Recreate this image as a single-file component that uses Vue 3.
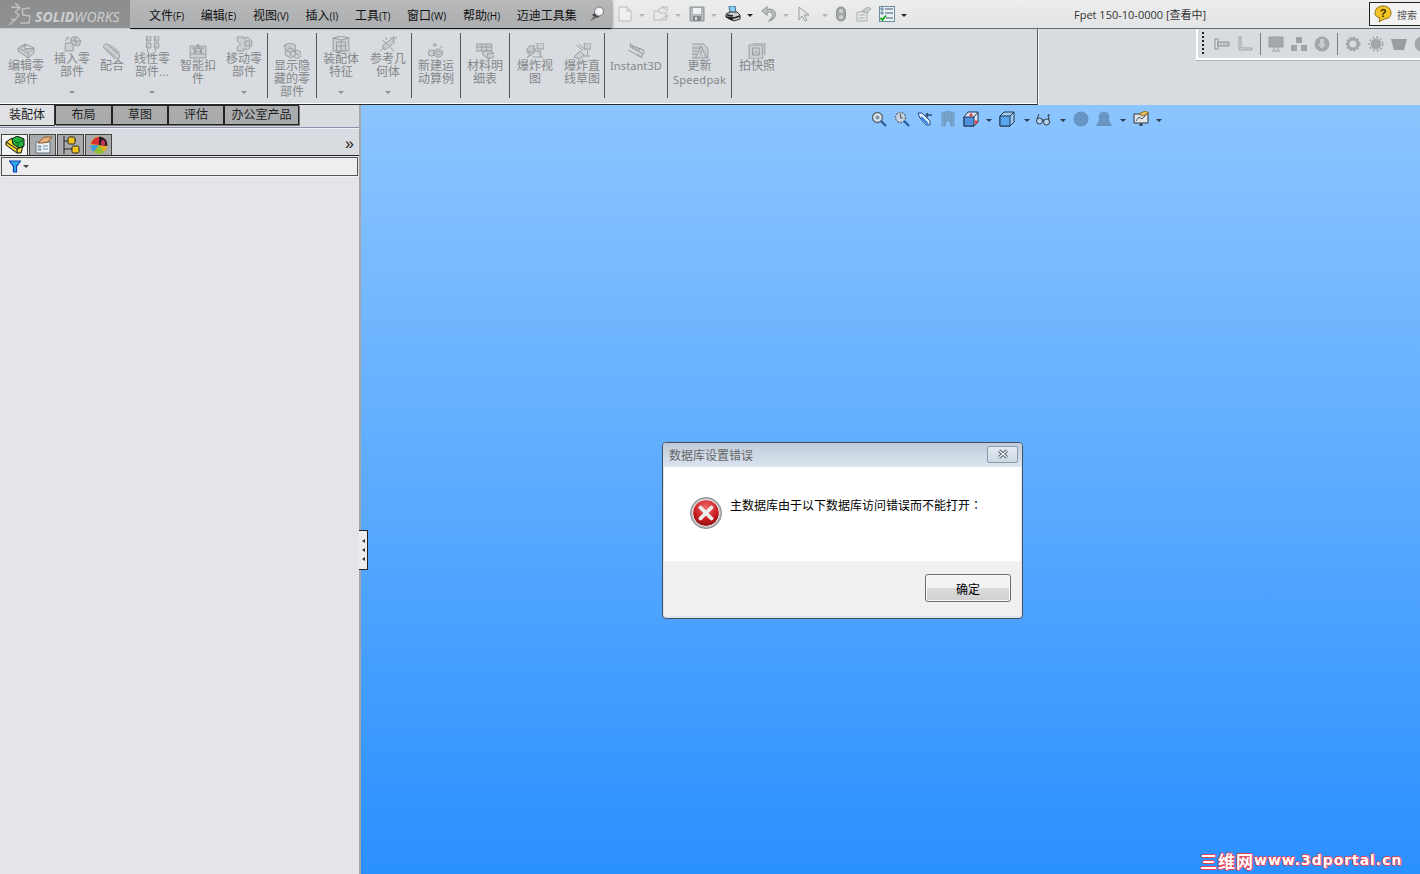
<script setup>
const menus = [
  ['文件', '(F)'], ['编辑', '(E)'], ['视图', '(V)'], ['插入', '(I)'], ['工具', '(T)'], ['窗口', '(W)'], ['帮助', '(H)'], ['迈迪工具集', '']
]
const S = 'sep'
const ribbon = [
  { w: 46, l: ['编辑零', '部件'], d: 'M1 5 7 1 15 5 15 10 10 15 1 8Z M7 1 7 6 15 5 M1 5 10 10 10 15 M10 10 15 5 M4 4 9 2 M7 6 10 7' },
  { w: 46, l: ['插入零', '部件'], arrow: 1, up: 1, d: 'M2 7 8 7 9 9 9 15 2 15Z M8 1 13 1 16 5 14 10 9 9 7 5Z M2 5 4 1 6 3 M11 1 11 9 M7 5 16 5 M9 3 14 8' },
  { w: 34, l: ['配合'], d: 'M4 1 14 11 A2.4 2.4 0 0 1 10 15 L1 5 A2 2 0 0 1 5 2 L13 11 M7 2 15 10 M3 6 11 14' },
  { w: 46, l: ['线性零', '部件...'], arrow: 1, up: 1, d: 'M3 0 7 0 7 5 3 5Z M10 0 14 0 14 5 10 5Z M3 7 7 7 7 12 3 12Z M10 7 14 7 14 12 10 12Z M3 3 5 3 M10 3 12 3 M3 10 5 10 M10 10 12 10 M4 13 4 16 M11 13 11 16' },
  { w: 46, l: ['智能扣', '件'], d: 'M1 3 15 3 15 15 1 15Z M1 11 15 11 M5 11 5 7 8 5 11 7 11 11 M8 1 9 5 13 5 10 7 11 10 8 8 5 10 6 7 3 5 7 5Z' },
  { w: 46, l: ['移动零', '部件'], arrow: 1, up: 1, d: 'M2 1 8 1 8 3 11 1 15 5 15 10 11 14 8 12 8 15 2 15 2 11 5 8 2 5Z M9 5 13 5 13 10 9 10Z' },
  S,
  { w: 48, l: ['显示隐', '藏的零', '部件'], d: 'M6 0 11 2 11 7 6 9 2 7 2 2Z M2 8 7 5 11 8 11 12 7 15 2 12Z M9 9 13 7 16 9 16 13 12 16 9 13 M6 3 6 6 M0 4 3 1 M7 9 7 13 M11 10 14 12' },
  S,
  { w: 48, l: ['装配体', '特征'], arrow: 1, up: 1, d: 'M1 2 8 0 15 2 15 15 1 15Z M1 2 8 4 15 2 M4 6 12 6 12 15 4 15Z M8 4 8 15 M4 10 12 10' },
  { w: 46, l: ['参考几', '何体'], arrow: 1, up: 1, d: 'M3 10 11 3 14 6 5 14Z M1 15 5 11 M13 0 13 5 M10 2 16 2 M3 4 8 9 M9 10 13 15 M6 1 7 4' },
  S,
  { w: 48, l: ['新建运', '动算例'], d: 'M10 6 A4 4 0 1 0 10 14 A4 4 0 1 0 10 6Z M4 7 A3 3 0 1 0 4 13 A3 3 0 1 0 4 7Z M10 8 A2 2 0 1 0 10 12 A2 2 0 1 0 10 8Z M7 0 7 4 M5 2 9 2 M12 4 14 4 M1 5 2 5' },
  S,
  { w: 48, l: ['材料明', '细表'], d: 'M0 1 14 1 14 8 0 8Z M0 4 14 4 M5 1 5 8 M9 1 9 8 M6 9 10 7 16 10 16 14 11 16 6 12Z M10 11 16 10 M10 11 11 16' },
  S,
  { w: 50, l: ['爆炸视', '图'], d: 'M10 0 16 0 16 6 10 6Z M3 3 8 3 6 6 9 6 5 9 8 9 1 15 4 10 1 10 4 8 0 8Z M8 8 13 8 13 14 M6 14 15 14' },
  { w: 44, l: ['爆炸直', '线草图'], d: 'M10 0 16 0 16 6 10 6Z M3 2 9 8 M5 1 11 7 M1 14 6 8 10 12 6 16Z M13 7 13 12 M9 13 15 13' },
  S,
  { w: 62, l: ['Instant3D'], en: 1, d: 'M3 0 3 4 14 11 M3 2 15 7 15 11 M5 2 5 5 M7 3 7 6 M9 4 9 7 M11 5 11 8 M1 7 12 14 M9 11 13 15 14 11' },
  S,
  { w: 63, l: ['更新', 'Speedpak'], d: 'M1 1 11 1 15 5 15 15 1 15 M1 5 9 5 M1 8 6 8 M1 11 5 11 M9 3 4 15 M9 3 14 15 M9 7 9 11 M9 12 9 13' },
  S,
  { w: 50, l: ['拍快照'], d: 'M4 0 15 0 15 12 M1 2 13 2 13 16 1 16Z M4 5 10 5 10 12 4 12Z M4 12 7 8 10 12' }
]
</script>

<template>
  <div class="app">
    <header class="top">
      <div class="logo">
        <svg class="logo-mark" viewBox="0 0 24 24" fill="none" stroke="#bfc1c3" stroke-width="1.5">
          <path d="M7 1 12 6 7 10 M12 6 3 5 M7 10 11 13 7 18 1 23 M7 18 3 17 M14 7 22 6 M14 7 15 13 22 14 21 21 12 21" />
        </svg>
        <span class="logo-a">SOLID</span><span class="logo-b">WORKS</span>
      </div>
      <nav class="menu">
        <span v-for="m in menus" :key="m[0]" class="menu-item">{{ m[0] }}<small>{{ m[1] }}</small></span>
        <svg class="pin" viewBox="0 0 16 16">
          <path d="M1 15 5 10 7 12Z" fill="#666" />
          <path d="M3 9 8 12 11 10 7 6Z" fill="#3f4245" />
          <circle cx="10" cy="5.5" r="4.5" fill="#eceef0" stroke="#77797c" />
          <circle cx="11" cy="4.5" r="2" fill="#fff" />
        </svg>
      </nav>
      <div class="quick">
        <svg class="q" style="margin-left:6px" viewBox="0 0 16 16"><path d="M2 1 10 1 14 5 14 15 2 15Z M10 1 10 5 14 5" fill="#eef0f1" stroke="#b9bbbd" /></svg>
        <i class="caret dim"></i>
        <svg class="q g2" viewBox="0 0 16 16"><path d="M1 5 6 5 7 7 13 7 13 14 1 14Z M5 4 10 1 12 4 M9 1 14 1 14 6 M7 14 15 9 13 14" fill="#e8e9ea" stroke="#b9bbbd" /></svg>
        <i class="caret dim"></i>
        <svg class="q g2" viewBox="0 0 16 16"><path d="M1 1 15 1 15 15 1 15Z" fill="#b5b8ba" stroke="#8f9294" /><path d="M4 2 12 2 12 8 4 8Z" fill="#eef0f1" /><path d="M4 10 12 10 12 15 4 15Z" fill="#85888a" /><path d="M6 11 8 11 8 14 6 14Z" fill="#dcdee0" /></svg>
        <i class="caret dim"></i>
        <svg class="q g2" viewBox="0 0 16 16"><path d="M4 0 10 0 11 7 5 7Z" fill="#8fcdf0" stroke="#3a6a96" /><path d="M1 8 5 6 12 6 15 9 15 13 9 15 1 11Z" fill="#c9cbcd" stroke="#333" /><path d="M1 11 9 12 15 10 M3 12 8 14 M2 9 8 10" stroke="#222" fill="none" stroke-width="1.4" /></svg>
        <i class="caret blk"></i>
        <svg class="q g2" viewBox="0 0 16 16"><path d="M6 1 1 5 6 9 6 6 C11 5 13 8 11 11 L8 15 C14 13 16 8 13 5 11 3 8 3 6 4Z" fill="#c6c8ca" stroke="#9b9ea0" stroke-width="1.2" /></svg>
        <i class="caret dim"></i>
        <svg class="q g4" viewBox="0 0 16 16"><path d="M1 1 1 14 4 10 7 15 9 14 6 9 11 9Z" fill="#e6e7e8" stroke="#9b9ea0" /></svg>
        <i class="caret dim c2"></i>
        <svg class="q g5" viewBox="0 0 16 16"><rect x="1.5" y="1" width="9" height="14" rx="4.5" fill="#a4a6a8" stroke="#8d9092" /><circle cx="6" cy="5" r="2" fill="#cfd1d3" /><circle cx="6" cy="11" r="2" fill="#cfd1d3" /></svg>
        <svg class="q g6" viewBox="0 0 16 16"><path d="M1 6 11 6 11 15 1 15Z M3 9 9 9 M3 12 9 12" fill="#e8e9ea" stroke="#a8abad" /><path d="M6 5 12 1 15 3 11 7Z" fill="#c8cacc" stroke="#a8abad" /></svg>
        <svg class="q g7" viewBox="0 0 16 16"><rect x="0.5" y="0.5" width="15" height="15" fill="#eaf1f6" stroke="#6f8ba0" /><path d="M6 3 14 3 M6 7 14 7 M7 12 14 12" stroke="#47586a" /><path d="M2 2 4 2 4 4 2 4Z M2 6 4 6 4 8 2 8Z" fill="none" stroke="#5a7ea0" /><path d="M1.5 12 3.5 14 7 9.5" stroke="#15a415" stroke-width="1.8" fill="none" /></svg>
        <i class="caret blk"></i>
      </div>
      <div class="doc-title">Fpet 150-10-0000 [查看中]</div>
      <div class="search">
        <svg class="help" viewBox="0 0 18 18">
          <path d="M9 1 C14 1 17 4 17 8 17 12 14 14 10 14 L5 17 6 13 C3 12 1 11 1 8 1 4 4 1 9 1Z" fill="#f5c528" stroke="#8f7215" />
          <text x="9" y="12" text-anchor="middle" class="help-q">?</text>
        </svg>
        <span>搜索</span>
      </div>
    </header>

    <section class="ribbon">
      <div class="ribbon-main">
        <template v-for="(b, i) in ribbon" :key="i">
          <div v-if="b === S" class="sep"></div>
          <div v-else class="rbtn" :class="{ up: b.up }" :style="{ width: b.w + 'px' }">
            <svg class="ricon" viewBox="0 0 16 16" preserveAspectRatio="none"><path :d="b.d" /></svg>
            <div class="rtext" :class="{ en: b.en }">
              <div v-for="t in b.l" :key="t" :class="{ latin: t === 'Speedpak' }">{{ t }}</div>
            </div>
            <i v-if="b.arrow" class="rarrow"></i>
          </div>
        </template>
      </div>
      <div class="ribbon-side">
        <div class="sidebar-tools">
          <span class="grip"></span>
          <svg class="t" viewBox="0 0 18 16"><path d="M2 3 5 3 5 13 2 13Z M5 6 16 6 16 10 5 10Z M8 6 8 10 M11 6 11 10 M14 6 14 10" fill="#dcdee0" stroke="#8f9294" /></svg>
          <svg class="t" viewBox="0 0 18 16"><path d="M3 1 5 1 5 12 16 12 16 14 3 14Z" fill="#dcdee0" stroke="#9da0a2" /></svg>
          <i class="tsep"></i>
          <svg class="t" viewBox="0 0 18 16"><path d="M2 1 16 1 16 11 2 11Z M7 11 7 14 M11 11 11 14 M5 15 13 15" fill="#a6a9ab" stroke="#9a9d9f" /></svg>
          <svg class="t" viewBox="0 0 18 16"><path d="M6 1 12 1 12 7 6 7Z M1 9 7 9 7 15 1 15Z M11 9 17 9 17 15 11 15Z" fill="#a0a3a5" /></svg>
          <svg class="t" viewBox="0 0 18 16"><circle cx="9" cy="8" r="7.5" fill="#a4a7a9" /><path d="M7 3 11 3 11 8 13 8 9 13 5 8 7 8Z" fill="#c8cacc" /></svg>
          <i class="tsep"></i>
          <svg class="t" viewBox="0 0 18 16"><circle cx="9" cy="8" r="5" fill="none" stroke="#a4a7a9" stroke-width="3" /><circle cx="9" cy="8" r="6.8" fill="none" stroke="#a4a7a9" stroke-width="1.4" stroke-dasharray="2 2" /></svg>
          <svg class="t" viewBox="0 0 18 16"><circle cx="9" cy="8" r="4.4" fill="#a4a7a9" stroke="#a4a7a9" stroke-width="2" /><circle cx="9" cy="8" r="6.8" fill="none" stroke="#a4a7a9" stroke-width="1.6" stroke-dasharray="2 2" /></svg>
          <svg class="t" viewBox="0 0 18 16"><path d="M1 3 17 3 14 14 4 14Z" fill="#9a9d9f" /></svg>
          <svg class="t" viewBox="0 0 18 16"><circle cx="9" cy="8" r="7.5" fill="#a4a7a9" /></svg>
        </div>
      </div>
    </section>

    <main class="work">
      <aside class="side">
        <div class="side-head">
          <div class="tabs">
            <span class="tab on">装配体</span>
            <span class="tab w56">布局</span>
            <span class="tab w55">草图</span>
            <span class="tab w55">评估</span>
            <span class="tab w74">办公室产品</span>
          </div>
          <div class="rule"></div>
          <div class="mgr">
            <span class="mtab on">
              <svg viewBox="0 0 20 18"><path d="M1 6 7 2 18 10 16 17 12 17 1 9Z" fill="#f2d63a" stroke="#111" /><path d="M1 6 12 13 12 17 M12 13 18 10" fill="none" stroke="#111" /><path d="M7 3 12 0 19 3 19 10 14 12 8 8Z" fill="#1fb040" stroke="#111" /><path d="M9 5 13 7 18 4 M13 7 13 11" fill="none" stroke="#0a5d1e" /></svg>
            </span>
            <span class="mtab">
              <svg viewBox="0 0 20 18"><path d="M3 6 17 6 17 17 3 17Z" fill="#eef1f4" stroke="#66727e" /><path d="M5 10 8 10 8 11 5 11Z M5 13 8 13 8 14 5 14Z M10 10 15 10 M10 13 15 13" stroke="#6a8ca8" fill="none" /><path d="M5 7 11 1 19 1 15 6 9 7Z" fill="#e6b27c" stroke="#8a5a2d" /></svg>
            </span>
            <span class="mtab">
              <svg viewBox="0 0 20 18"><path d="M3 0 3 18 M3 5 7 5 M3 13 11 13 M11 4 15 4" stroke="#222" fill="none" /><rect x="7" y="1" width="7" height="7" rx="1.5" fill="#f2c21d" stroke="#222" /><rect x="11" y="10" width="7" height="7" rx="1.5" fill="#f2c21d" stroke="#222" /></svg>
            </span>
            <span class="mtab">
              <svg viewBox="0 0 20 18"><circle cx="10" cy="9" r="8.5" fill="#e0b020" /><path d="M2 8 A8 8 0 0 1 10 1 L10 9Z" fill="#d83030" /><path d="M1.5 9 10 9 5 16 A8 8 0 0 1 1.5 9Z" fill="#3f9ed8" /><path d="M10 0.5 A8.5 8.5 0 0 1 18.5 10 L10 9Z" fill="#2a1a28" /><path d="M5 16 10 9 15 16 A8 8 0 0 1 5 16Z" fill="#8fc033" /><ellipse cx="14" cy="7" rx="2" ry="3" fill="#c8385a" /></svg>
            </span>
            <span class="more">»</span>
          </div>
        </div>
        <div class="filter">
          <svg class="funnel" viewBox="0 0 12 13"><path d="M0.5 1 11.5 1 7.5 6.5 7.5 12 4.5 12 4.5 6.5Z" fill="#35a8e8" stroke="#0f3fb0" stroke-width="1.2" /></svg>
          <i class="caret blk small"></i>
        </div>
      </aside>

      <section class="view">
        <div class="handle"><i></i><i></i><i></i></div>
        <div class="hud">
          <svg class="h" viewBox="0 0 16 16"><circle cx="6.5" cy="6.5" r="5" fill="#d7e3ee" stroke="#5c6a78" stroke-width="1.4" /><circle cx="6.5" cy="6.5" r="2" fill="#8393a3" /><path d="M10 10 15 15" stroke="#2f60a0" stroke-width="2.4" /></svg>
          <svg class="h" viewBox="0 0 16 16"><circle cx="6.5" cy="6.5" r="5" fill="#c7d5e2" stroke="#66727e" stroke-width="1.4" stroke-dasharray="2 1" /><path d="M6.5 3 6.5 7 9 7" stroke="#555" fill="none" /><path d="M10 10 15 15" stroke="#2f60a0" stroke-width="2.4" /></svg>
          <svg class="h" viewBox="0 0 16 16"><path d="M1 2 5 2 13 10 13 14 9 14 3 7Z" fill="#e5f0fb" stroke="#1f4a86" /><path d="M4 6 11 13" stroke="#2c7be0" stroke-width="2" /><path d="M15 4 9 4 M11 2 9 4 11 6" stroke="#2f4f78" fill="none" stroke-width="1.4" /></svg>
          <svg class="h" viewBox="0 0 16 16"><path d="M2 2 C6 0 10 0 14 2 L14 15 11 15 C11 8 5 8 5 15 L2 15Z" fill="#7aa6ce" stroke="#7099c2" /><path d="M5 2 5 14 M8 1 8 9 M11 2 11 14" stroke="#6a93bb" /></svg>
          <svg class="h" viewBox="0 0 16 16"><path d="M1 6 5 1 15 1 15 11 11 15 1 15Z" fill="#dbeaf8" stroke="#23344a" /><path d="M1 6 11 6 11 15 1 15Z" fill="#4f92e0" stroke="#23344a" /><path d="M11 6 15 1" stroke="#23344a" /><path d="M8 2 8 6 M6 4 10 4 M11 11 15 11 M13 9 13 13" stroke="#d92020" /></svg>
          <i class="caret blk c3"></i>
          <svg class="h" viewBox="0 0 16 16"><path d="M1 5 5 1 15 1 15 11 11 15 1 15Z" fill="#9fccf5" stroke="#23344a" /><path d="M1 5 11 5 11 15 1 15Z" fill="#5aa5f0" stroke="#23344a" /><path d="M11 5 15 1" stroke="#23344a" /></svg>
          <i class="caret blk c3 c4"></i>
          <svg class="h" viewBox="0 0 16 16"><circle cx="4.5" cy="10" r="3" fill="#b5d3ee" stroke="#2f3a44" /><circle cx="11.5" cy="11" r="3" fill="#b5d3ee" stroke="#2f3a44" /><path d="M7 9 9 9 M2 8 4 3 M14 9 13 4 15 4" stroke="#2f3a44" fill="none" /></svg>
          <i class="caret blk c3 c5"></i>
          <svg class="h" viewBox="0 0 16 16"><circle cx="8" cy="8" r="7.5" fill="#6795c4" /></svg>
          <svg class="h" viewBox="0 0 16 16"><circle cx="8" cy="6" r="5.5" fill="#6795c4" /><path d="M0 15 3 9 13 9 16 15Z" fill="#6795c4" /></svg>
          <i class="caret blk c3 c6"></i>
          <svg class="h" viewBox="0 0 16 16"><path d="M1 3 15 3 15 12 1 12Z" fill="#dfe6ee" stroke="#2f3338" /><path d="M3 10 6 6 9 8 13 4" stroke="#4a5058" fill="none" /><path d="M6 3 12 0 16 2 10 5Z" fill="#e8bd5b" stroke="#8a6a24" /><path d="M6 14 10 14 M8 12 8 15" stroke="#222" /></svg>
          <i class="caret blk c3"></i>
        </div>

        <div class="dialog">
          <div class="dlg-title">
            <span>数据库设置错误</span>
            <button class="dlg-close"><svg viewBox="0 0 12 10"><path d="M2 1.5 10 8.5 M10 1.5 2 8.5" stroke="#4a5866" stroke-width="3" /><path d="M2 1.5 10 8.5 M10 1.5 2 8.5" stroke="#fff" stroke-width="1.2" /></svg></button>
          </div>
          <div class="dlg-body">
            <svg class="err" viewBox="0 0 32 32">
              <defs>
                <radialGradient id="er" cx="50%" cy="30%" r="75%">
                  <stop offset="0" stop-color="#f0686a" />
                  <stop offset="0.6" stop-color="#c81e22" />
                  <stop offset="1" stop-color="#7c0a0c" />
                </radialGradient>
              </defs>
              <circle cx="16" cy="16" r="15.5" fill="#b5b8ba" stroke="#8c8f92" />
              <circle cx="16" cy="16" r="13.4" fill="url(#er)" stroke="#f1f1f1" />
              <path d="M10.5 10.5 21.5 21.5 M21.5 10.5 10.5 21.5" stroke="#efeeee" stroke-width="3.8" stroke-linecap="round" />
            </svg>
            <p>主数据库由于以下数据库访问错误而不能打开<span class="colon">：</span></p>
          </div>
          <div class="dlg-foot">
            <button class="dlg-ok">确定</button>
          </div>
        </div>

        <div class="mark"><b>三维网</b><span>www.3dportal.cn</span></div>
      </section>
    </main>
  </div>
</template>

<style>
html, body { margin: 0; overflow: hidden; }
</style>

<style scoped>
.app {
  width: 1420px;
  height: 874px;
  display: flex;
  flex-direction: column;
  overflow: hidden;
  font-family: "Noto Sans CJK SC", "Noto Sans", sans-serif;
  font-size: 12px;
  background: #d8dbdf;
}
.top {
  height: 29px;
  box-sizing: border-box;
  flex: none;
  display: flex;
  background: linear-gradient(#eceded, #e3e4e5);
  border-bottom: 1px solid #6a6d70;
  position: relative;
}
.logo {
  width: 130px;
  height: 29px;
  flex: none;
  display: flex;
  align-items: center;
  box-sizing: border-box;
  padding: 0 0 0 8px;
  background: linear-gradient(#8c8d8e, #909192);
  border-bottom: 1px solid #c8cacc;
  font-family: "Open Sans", sans-serif;
  font-size: 14px;
  line-height: 1;
  color: #cfd0d2;
}
.logo-mark { width: 24px; height: 24px; margin-right: 3px; flex: none; }
.logo-a { font-weight: 700; font-style: italic; letter-spacing: 0.1px; padding-top: 5px; }
.logo-b { font-weight: 400; font-style: italic; letter-spacing: 0.1px; padding-top: 5px; }
.menu {
  width: 481px;
  height: 29px;
  flex: none;
  box-sizing: border-box;
  padding: 2px 0 0 19px;
  display: flex;
  align-items: center;
  gap: 16.7px;
  background: linear-gradient(#b6b8ba, #acaeb0);
  border-bottom: 1px solid #111;
  box-shadow: 2px 0 2px rgba(90, 90, 90, 0.45);
  color: #111;
  position: relative;
  z-index: 1;
}
.menu-item { white-space: nowrap; line-height: 16px; }
.menu-item small { font-size: 10px; font-family: "Open Sans", sans-serif; }
.pin { width: 16px; height: 16px; margin-left: -5px; margin-top: -2px; }
.quick { display: flex; align-items: center; height: 28px; }
.q { width: 16px; height: 16px; flex: none; }
.g2 { margin-left: 8px; }
.g4 { margin-left: 9px; }
.g5 { margin-left: 7px; }
.g6 { margin-left: 5px; }
.g7 { margin-left: 7px; }
.caret {
  display: block;
  width: 0;
  height: 0;
  border-style: solid;
  border-width: 3px 3px 0;
  border-color: #222 transparent transparent;
  margin-left: 6px;
  margin-top: 2px;
  flex: none;
}
.caret.dim { border-top-color: #b2b4b6; }
.caret.c2 { margin-left: 8px; }
.doc-title {
  position: absolute;
  left: 1074px;
  top: 6px;
  font-family: "Open Sans", "Noto Sans CJK SC", sans-serif;
  font-size: 11px;
  line-height: 18px;
  color: #333;
  white-space: nowrap;
}
.search {
  position: absolute;
  left: 1369px;
  top: 2px;
  width: 51px;
  height: 24px;
  box-sizing: border-box;
  background: #f3f3f3;
  border: 1px solid #222;
  border-right: 0;
  display: flex;
  align-items: center;
  padding-left: 4px;
  font-size: 10px;
  color: #555;
}
.help { width: 18px; height: 18px; margin-right: 5px; flex: none; }
.help-q { font: 700 11px "Liberation Sans", sans-serif; fill: #3a2a00; }

.ribbon {
  height: 76px;
  flex: none;
  display: flex;
  background: #d8dbdf;
}
.ribbon-main {
  width: 1038px;
  flex: none;
  box-sizing: border-box;
  padding-left: 3px;
  display: flex;
  align-items: flex-start;
  border-bottom: 1px solid #2a2a2a;
  border-right: 1px solid #5c5e60;
  box-shadow: inset 0 -1px 0 #fff;
}
.sep { width: 1px; height: 65px; margin-top: 4px; background: #55575a; flex: none; }
.rbtn {
  flex: none;
  height: 75px;
  box-sizing: border-box;
  padding-top: 14px;
  display: flex;
  flex-direction: column;
  align-items: center;
  position: relative;
}
.rbtn.up { padding-top: 7px; }
.ricon { width: 18px; height: 16px; flex: none; }
.ricon path { fill: #ccced1; stroke: #9a9da0; stroke-width: 1; vector-effect: non-scaling-stroke; }
.rtext {
  text-align: center;
  font-family: "Liberation Sans", "Noto Sans CJK SC", sans-serif;
  line-height: 13px;
  color: #84878a;
  margin-top: 1px;
  white-space: nowrap;
}
.rtext.en, .latin { font-family: "Noto Sans", sans-serif; font-size: 11px; letter-spacing: 0.3px; }
.rtext.en { letter-spacing: 0.1px; margin-top: 0; }
.rarrow {
  position: absolute;
  left: 50%;
  margin-left: -3px;
  top: 62px;
  border-style: solid;
  border-width: 3px 3px 0;
  border-color: #8e9194 transparent transparent;
}
.ribbon-side { flex: 1; border-left: 1px solid #f4f4f5; }
.sidebar-tools {
  margin-left: 157px;
  height: 31px;
  box-sizing: border-box;
  border-left: 2px solid #fff;
  border-bottom: 2px solid #fff;
  display: flex;
  align-items: center;
  overflow: hidden;
  box-shadow: 0 1px 0 #aeb0b2;
}
.grip {
  width: 2px;
  height: 24px;
  margin-left: 4px;
  margin-right: 9px;
  background: repeating-linear-gradient(#222 0 2px, transparent 2px 4px);
  flex: none;
}
.t { width: 18px; height: 16px; flex: none; margin-right: 5px; }
.tsep { width: 1px; height: 22px; background: #7c7f82; margin: 0 6px 0 1px; flex: none; }

.work { flex: 1; display: flex; min-height: 0; }
.side {
  width: 359px;
  flex: none;
  background: #e3e5e8;
  border-right: 2px solid #a3a5a7;
  display: flex;
  flex-direction: column;
}
.side-head { background: #d8dbdf; height: 51px; }
.tabs { display: flex; height: 21px; align-items: flex-start; }
.tab {
  box-sizing: border-box;
  height: 20px;
  background: #a9abad;
  border: 1px solid #222;
  text-align: center;
  line-height: 16px;
  color: #222;
  box-shadow: 1px 1px 0 #777;
  flex: none;
}
.tab.on {
  width: 55px;
  background: #dfe1e4;
  border: 0;
  height: 21px;
  border-bottom: 1px solid #333;
  border-right: 1px solid #333;
  box-shadow: none;
  line-height: 17px;
}
.w56 { width: 57px; }
.w55 { width: 56px; }
.w74 { width: 75px; }
.rule { height: 1px; background: #8d90a8; margin-top: 1px; box-shadow: 0 1px 0 #eef; }
.mgr {
  height: 28px;
  box-sizing: border-box;
  display: flex;
  align-items: flex-end;
  padding-left: 1px;
  border-bottom: 1px solid #222;
  position: relative;
}
.mtab {
  width: 27px;
  height: 21px;
  box-sizing: border-box;
  background: #a9abad;
  border: 1px solid #444;
  border-bottom: 0;
  display: flex;
  align-items: center;
  justify-content: center;
  margin-right: 1px;
}
.mtab.on { background: #f2f3f4; }
.mtab svg { width: 20px; height: 18px; }
.more {
  position: absolute;
  right: 5px;
  top: 7px;
  font: 400 16px/18px "Liberation Sans", sans-serif;
  color: #222;
}
.filter {
  margin: 1px 1px 0;
  height: 19px;
  box-sizing: border-box;
  background: #eeeef0;
  border: 1px solid #555;
  display: flex;
  align-items: center;
  padding-left: 7px;
  box-shadow: 0 1px 0 #f4f4f5;
}
.funnel { width: 12px; height: 13px; }
.caret.small { margin-left: 2px; border-top-color: #444; margin-top: 0; border-width: 3px 3.5px 0; }

.view {
  flex: 1;
  position: relative;
  background: linear-gradient(#8cc5ff, #2a90ff);
  min-width: 0;
}
.handle {
  position: absolute;
  left: -2px;
  top: 425px;
  width: 6px;
  height: 38px;
  background: #ececef;
  border: 1px solid #222;
  border-left: 0;
  display: flex;
  flex-direction: column;
  justify-content: center;
  align-items: flex-end;
  gap: 5px;
  padding-right: 2px;
  box-sizing: content-box;
}
.handle i {
  display: block;
  border-style: solid;
  border-width: 2.5px 3px 2.5px 0;
  border-color: transparent #333 transparent transparent;
}
.hud {
  position: absolute;
  left: 510px;
  top: 6px;
  display: flex;
  align-items: center;
  height: 16px;
  gap: 7px;
}
.h { width: 16px; height: 16px; flex: none; }
.caret.c3 { margin: 2px 0 0; border-top-color: #2d3d4f; }
.caret.c4 { margin: 2px -2px 0 2px; }
.caret.c5 { margin: 2px 0 0 2px; }
.caret.c6 { margin: 2px 0 0 1px; }

.dialog {
  position: absolute;
  left: 301px;
  top: 337px;
  width: 361px;
  height: 177px;
  box-sizing: border-box;
  border: 1px solid #47505a;
  border-radius: 4px;
  padding: 0 1px 2px;
  background: #dbe5ef;
  display: flex;
  flex-direction: column;
  overflow: hidden;
}
.dlg-title {
  height: 24px;
  flex: none;
  background: linear-gradient(#bfcbd8, #dae5f0);
  display: flex;
  align-items: center;
  justify-content: space-between;
  padding: 0 4px 2px 6px;
  box-sizing: border-box;
  color: #666;
  margin: 0 -1px;
}
.dlg-close {
  width: 31px;
  height: 17px;
  padding: 0;
  border: 1px solid #8a99ab;
  border-radius: 2px;
  background: linear-gradient(#e4ebf2, #cdd7e3);
  display: flex;
  align-items: center;
  justify-content: center;
}
.dlg-close svg { width: 12px; height: 10px; }
.dlg-body {
  height: 94px;
  flex: none;
  background: #fff;
  display: flex;
  align-items: flex-start;
  padding: 28px 0 0 26px;
  box-sizing: border-box;
}
.err { width: 32px; height: 32px; flex: none; margin-right: 8px; margin-top: 2px; }
.dlg-body p {
  margin: 0;
  line-height: 20px;
  color: #000;
  white-space: nowrap;
}
.colon { font-family: "Noto Sans CJK TC", sans-serif; }
.dlg-foot {
  flex: 1;
  background: #f0f0f0;
  display: flex;
  justify-content: flex-end;
  align-items: flex-start;
  padding: 13px 10px 0 0;
}
.dlg-ok {
  width: 86px;
  height: 28px;
  box-sizing: border-box;
  border: 1px solid #6d6d6d;
  border-radius: 3px;
  background: linear-gradient(#f3f3f3 0 50%, #dcdcdc 50%, #cfcfcf);
  box-shadow: inset 0 0 0 1px #fbfbfb;
  font: 12px "Noto Sans CJK SC", sans-serif;
  color: #000;
  padding: 0;
}
.mark {
  position: absolute;
  left: 839px;
  top: 746px;
  display: flex;
  align-items: center;
  height: 18px;
  color: #fff;
  text-shadow: 1px 0 0 #e8404f, -1px 0 0 #e8404f, 0 1px 0 #e8404f, 0 -1px 0 #e8404f;
  white-space: nowrap;
}
.mark b { font-size: 17px; letter-spacing: 1px; font-weight: 700; }
.mark span { font: 700 14px "DejaVu Sans", sans-serif; letter-spacing: 0.95px; }
</style>
